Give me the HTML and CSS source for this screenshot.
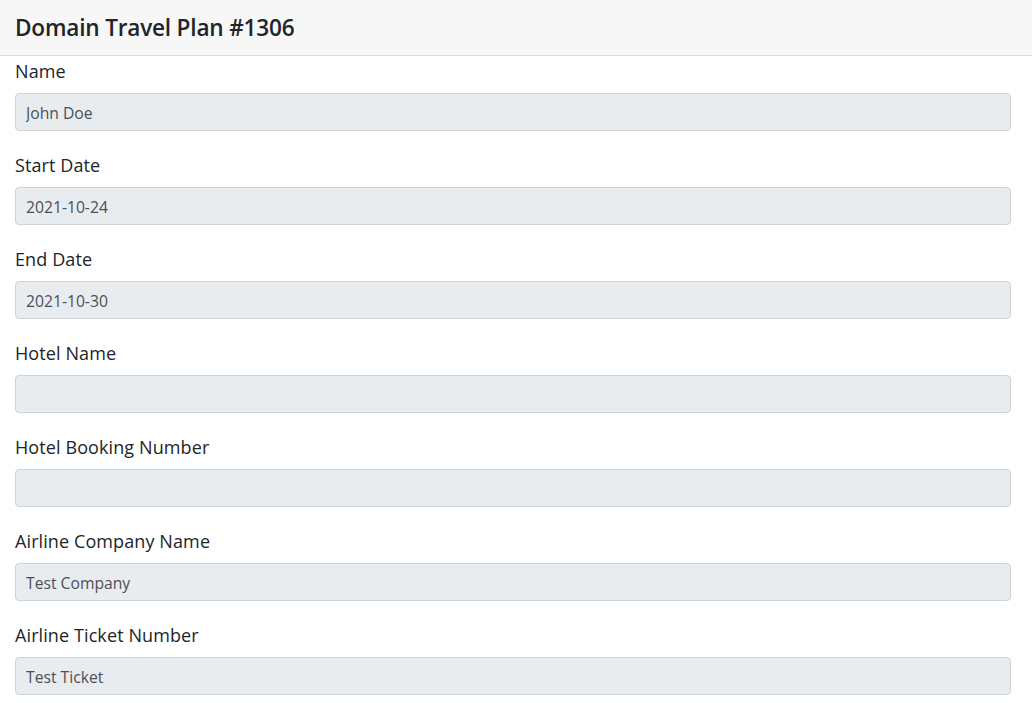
FILE: index.html
```html
<!DOCTYPE html>
<html lang="en">
<head>
<meta charset="utf-8">
<title>Domain Travel Plan #1306</title>
<link rel="stylesheet" href="styles.css">
</head>
<body>
<div class="card">
  <div class="card-header"><h4 class="title">Domain Travel Plan #1306</h4></div>
  <div class="card-body">
    <div class="group"><label class="label">Name</label><input class="control" type="text" value="John Doe" readonly></div>
    <div class="group"><label class="label">Start Date</label><input class="control" type="text" value="2021-10-24" readonly></div>
    <div class="group"><label class="label">End Date</label><input class="control" type="text" value="2021-10-30" readonly></div>
    <div class="group"><label class="label">Hotel Name</label><input class="control" type="text" value="" readonly></div>
    <div class="group"><label class="label">Hotel Booking Number</label><input class="control" type="text" value="" readonly></div>
    <div class="group"><label class="label">Airline Company Name</label><input class="control" type="text" value="Test Company" readonly></div>
    <div class="group"><label class="label">Airline Ticket Number</label><input class="control" type="text" value="Test Ticket" readonly></div>
  </div>
</div>
</body>
</html>
```
FILE: styles.css
```css
html, body {
  margin: 0;
  padding: 0;
  background: #fff;
  font-family: "Open Sans", "Noto Sans", sans-serif;
  color: #212529;
}
.card {
  width: 1032px;
}
.card-header {
  background: #f7f7f7;
  border-bottom: 1px solid #dcdcdc;
  display: flex;
  align-items: center;
  padding: 0 15px;
  box-sizing: border-box;
  height: 56px;
}
.title {
  margin: 0;
  font-size: 22.6px;
  font-weight: 600;
  line-height: 28px;
  color: #212529;
  letter-spacing: -0.2px;
}
.card-body {
  padding: 1px 22px 0 15px;
  display: flex;
  flex-direction: column;
  gap: 20px;
}
.group {
  display: flex;
  flex-direction: column;
}
.label {
  font-size: 18px;
  line-height: 28px;
  margin-bottom: 8px;
  color: #212529;
  letter-spacing: 0.1px;
}
.control {
  box-sizing: border-box;
  height: 38px;
  width: 996px;
  margin: 0;
  padding: 2px 10px 0;
  border: 1px solid #ced4da;
  border-radius: 4px;
  background: #e9ecef;
  color: #495057;
  font-family: "Open Sans", "Noto Sans", sans-serif;
  font-size: 15.7px;
  outline: none;
}
```
